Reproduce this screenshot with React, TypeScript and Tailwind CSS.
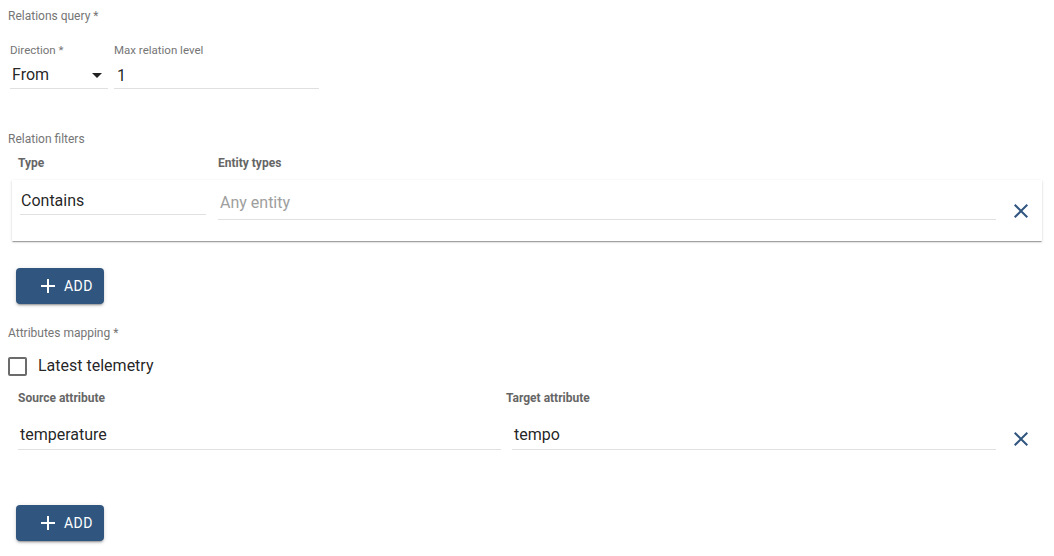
import React from "react";

const CloseIcon = () => (
  <svg width="24" height="24" viewBox="0 0 24 24" fill="#305680">
    <path d="M19 6.41L17.59 5 12 10.59 6.41 5 5 6.41 10.59 12 5 17.59 6.41 19 12 13.41 17.59 19 19 17.59 13.41 12z" />
  </svg>
);

const AddButton = () => (
  <button className="flex items-center h-[36px] w-[88px] rounded-[4px] bg-[#305680] text-white shadow-[0_3px_1px_-2px_rgba(0,0,0,0.2),0_2px_2px_0_rgba(0,0,0,0.14),0_1px_5px_0_rgba(0,0,0,0.12)] pl-[20px]">
    <svg width="24" height="24" viewBox="0 0 24 24" fill="white">
      <path d="M19 13h-6v6h-2v-6H5v-2h6V5h2v6h6v2z" />
    </svg>
    <span className="ml-[4px] text-[14px] font-normal tracking-[0.03em] leading-none">ADD</span>
  </button>
);

export default function App() {
  return (
    <div className="w-[1054px] h-[556px] bg-white px-2 text-[#000000de] font-['Roboto',sans-serif]">
      <div className="pt-[8px] text-[12px] leading-4 text-[#757575]">Relations query *</div>

      <div className="flex mt-[18px] ml-[2px] gap-[6px]">
        <div className="w-[98px] border-b border-[#e0e0e0]">
          <div className="text-[11.5px] leading-4 text-[#757575]">Direction *</div>
          <div className="flex items-center justify-between mt-[8px] h-5 pb-[2px] pl-[2px]">
            <span className="text-[16px] leading-5">From</span>
            <svg width="24" height="24" viewBox="0 0 24 24" fill="#222" className="-mr-[1px]">
              <path d="M7 10l5 5 5-5z" />
            </svg>
          </div>
          <div className="h-[2px]" />
        </div>
        <div className="w-[205px] border-b border-[#e0e0e0]">
          <div className="text-[11.5px] leading-4 text-[#757575]">Max relation level</div>
          <div className="mt-[8px] h-5 pl-[3px] text-[16px] leading-5">1</div>
          <div className="h-[2px]" />
        </div>
      </div>

      <div className="mt-[42px] text-[12px] leading-4 text-[#757575]">Relation filters</div>
      <div className="flex mt-[8px] text-[12px] leading-4 font-bold text-[#666]">
        <div className="w-[210px] pl-[10px]">Type</div>
        <div>Entity types</div>
      </div>

      <div className="mt-[9px] ml-[4px] w-[1030px] h-[61px] bg-white shadow-[0_2px_1px_-1px_rgba(0,0,0,0.2),0_1px_1px_0_rgba(0,0,0,0.14),0_1px_3px_0_rgba(0,0,0,0.12)] flex items-start pl-[8px]">
        <div className="w-[186px] mt-[11px] border-b border-[#e0e0e0] pl-[1px] h-[24px] text-[16px] leading-5">Contains</div>
        <div className="ml-[12px] flex-1 mt-[13px] border-b border-[#e0e0e0] pl-[2px] h-[27px] text-[16px] leading-5 text-[#9e9e9e]">Any entity</div>
        <div className="w-[46px] flex justify-center mt-[19px] pl-[4px]">
          <CloseIcon />
        </div>
      </div>

      <div className="mt-[27px] ml-[8px]">
        <AddButton />
      </div>

      <div className="mt-[21px] text-[12px] leading-4 text-[#757575]">Attributes mapping *</div>

      <div className="flex items-center mt-[15px]">
        <div className="w-[19px] h-[19px] border-2 border-[#6b6b6b] rounded-[2px]" />
        <span className="ml-[11px] text-[16px] leading-5">Latest telemetry</span>
      </div>

      <div className="flex mt-[14px] text-[12px] leading-4 font-bold text-[#666]">
        <div className="w-[498px] pl-[10px]">Source attribute</div>
        <div>Target attribute</div>
      </div>

      <div className="flex items-start mt-[17px]">
        <div className="ml-[10px] w-[483px] border-b border-[#e0e0e0] pl-[2px] h-[27px] text-[16px] leading-5 pt-[2px]">temperature</div>
        <div className="ml-[11px] w-[484px] border-b border-[#e0e0e0] pl-[2px] h-[27px] text-[16px] leading-5 pt-[2px]">tempo</div>
        <div className="w-[46px] flex justify-center mt-[4px] pl-[4px]">
          <CloseIcon />
        </div>
      </div>

      <div className="mt-[54px] ml-[8px]">
        <AddButton />
      </div>
    </div>
  );
}
